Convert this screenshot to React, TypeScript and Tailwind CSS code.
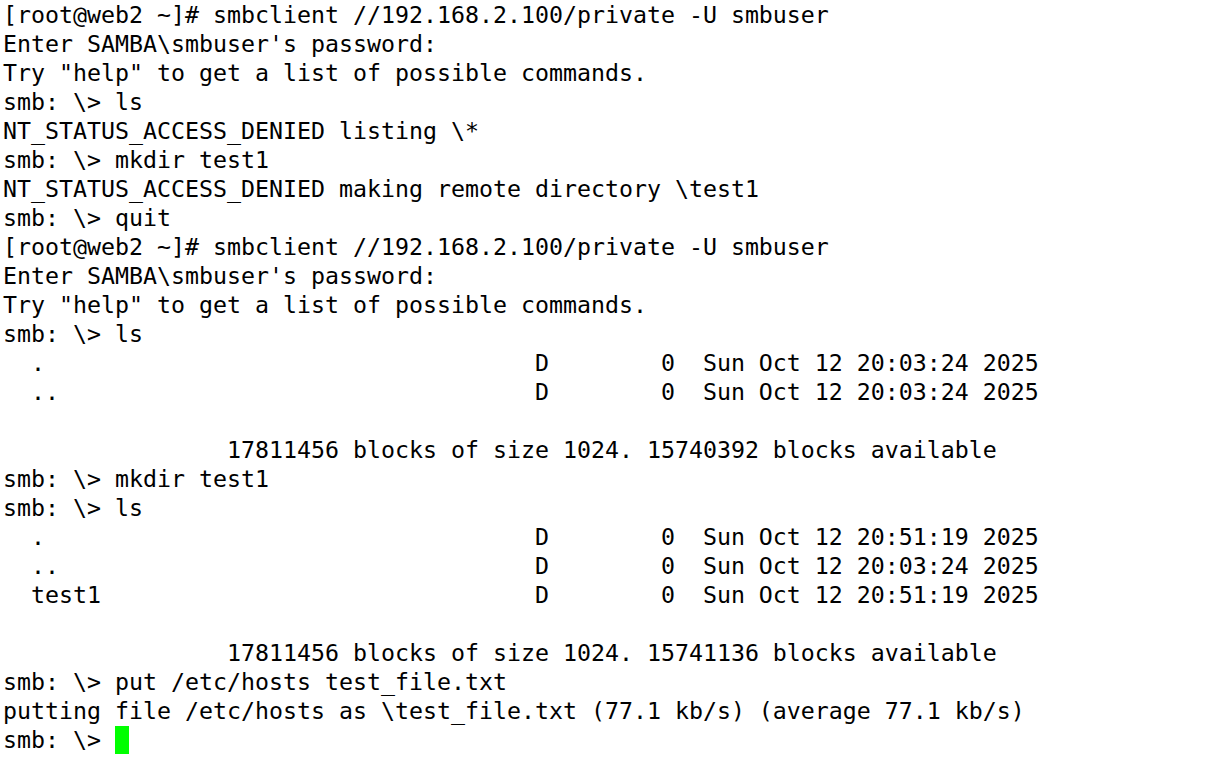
import React from "react";

const entry = (name: string, date: string) =>
  "  " + name.padEnd(36, " ") + "D" + " ".repeat(8) + "0  " + date;

const lines: string[] = [
  "[root@web2 ~]# smbclient //192.168.2.100/private -U smbuser",
  "Enter SAMBA\\smbuser's password:",
  'Try "help" to get a list of possible commands.',
  "smb: \\> ls",
  "NT_STATUS_ACCESS_DENIED listing \\*",
  "smb: \\> mkdir test1",
  "NT_STATUS_ACCESS_DENIED making remote directory \\test1",
  "smb: \\> quit",
  "[root@web2 ~]# smbclient //192.168.2.100/private -U smbuser",
  "Enter SAMBA\\smbuser's password:",
  'Try "help" to get a list of possible commands.',
  "smb: \\> ls",
  entry(".", "Sun Oct 12 20:03:24 2025"),
  entry("..", "Sun Oct 12 20:03:24 2025"),
  "",
  " ".repeat(16) + "17811456 blocks of size 1024. 15740392 blocks available",
  "smb: \\> mkdir test1",
  "smb: \\> ls",
  entry(".", "Sun Oct 12 20:51:19 2025"),
  entry("..", "Sun Oct 12 20:03:24 2025"),
  entry("test1", "Sun Oct 12 20:51:19 2025"),
  "",
  " ".repeat(16) + "17811456 blocks of size 1024. 15741136 blocks available",
  "smb: \\> put /etc/hosts test_file.txt",
  "putting file /etc/hosts as \\test_file.txt (77.1 kb/s) (average 77.1 kb/s)",
];

export default function App() {
  return (
    <div
      className="w-[1223px] h-[760px] bg-white text-black overflow-hidden pl-[3px]"
      style={{ fontFamily: '"DejaVu Sans Mono", monospace' }}
    >
      <div className="text-[23.25px] leading-[29px] whitespace-pre">
        {lines.map((l, i) => (
          <div key={i} className="h-[29px]">
            {l}
          </div>
        ))}
        <div className="h-[29px] flex items-center">
          <span>{"smb: \\> "}</span>
          <span className="inline-block w-[14px] h-[28px] bg-[#00ff00]" />
        </div>
      </div>
    </div>
  );
}
